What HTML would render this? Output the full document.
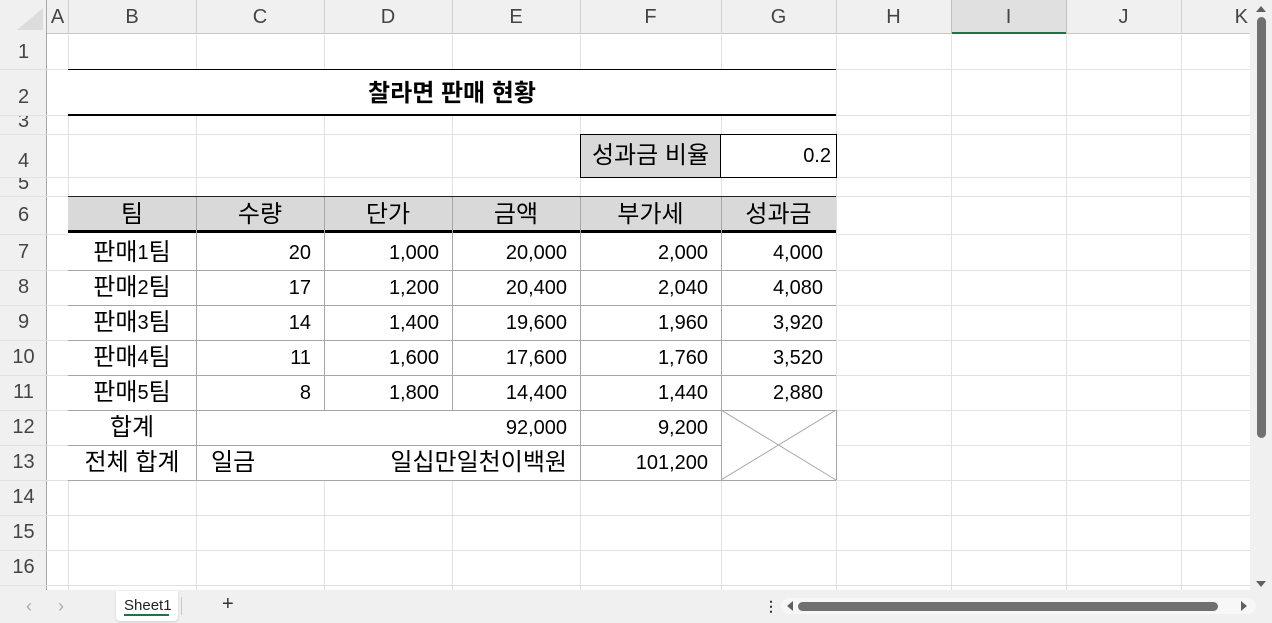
<!DOCTYPE html>
<html><head><meta charset="utf-8"><style>
*{margin:0;padding:0;box-sizing:border-box}
body{width:1272px;height:623px;overflow:hidden;background:#fff;position:relative;font-family:"Liberation Sans","Noto Sans CJK KR",sans-serif;color:#000}
.a{position:absolute}
.v{position:absolute;width:1px;background:#e1e1e1}
.h{position:absolute;height:1px;background:#e1e1e1}
.t{position:absolute;font-size:20px;line-height:20px;display:flex;align-items:center;white-space:nowrap}
.k{font-size:24px;line-height:20px}
.r{justify-content:flex-end;padding-right:13px}
.c{justify-content:center}
.hd{position:absolute;font-size:20px;color:#444;display:flex;align-items:center;justify-content:center}
</style></head><body>
<div class="a" style="left:0;top:0;width:1250px;height:34px;background:#f0f0f0;border-bottom:1px solid #c8c8c8"></div>
<div class="a" style="left:0;top:0;width:47px;height:590px;background:#f0f0f0;border-right:1px solid #a8a8a8"></div>
<div class="a" style="left:17px;top:8px;width:0;height:0;border-left:26px solid transparent;border-bottom:22px solid #dcdcdc"></div>
<div class="a" style="left:951px;top:0;width:115px;height:34px;background:#e0e0e0;border-bottom:2px solid #217346"></div>
<div class="v" style="left:68px;top:0;height:34px;background:#d0d0d0"></div>
<div class="v" style="left:196px;top:0;height:34px;background:#d0d0d0"></div>
<div class="v" style="left:324px;top:0;height:34px;background:#d0d0d0"></div>
<div class="v" style="left:452px;top:0;height:34px;background:#d0d0d0"></div>
<div class="v" style="left:580px;top:0;height:34px;background:#d0d0d0"></div>
<div class="v" style="left:721px;top:0;height:34px;background:#d0d0d0"></div>
<div class="v" style="left:836px;top:0;height:34px;background:#d0d0d0"></div>
<div class="v" style="left:951px;top:0;height:34px;background:#c0c0c0"></div>
<div class="v" style="left:1066px;top:0;height:34px;background:#c0c0c0"></div>
<div class="v" style="left:1181px;top:0;height:34px;background:#d0d0d0"></div>
<div class="hd" style="left:47px;top:0;width:21px;height:34px">A</div>
<div class="hd" style="left:68px;top:0;width:128px;height:34px">B</div>
<div class="hd" style="left:196px;top:0;width:128px;height:34px">C</div>
<div class="hd" style="left:324px;top:0;width:128px;height:34px">D</div>
<div class="hd" style="left:452px;top:0;width:128px;height:34px">E</div>
<div class="hd" style="left:580px;top:0;width:141px;height:34px">F</div>
<div class="hd" style="left:721px;top:0;width:115px;height:34px">G</div>
<div class="hd" style="left:836px;top:0;width:115px;height:34px">H</div>
<div class="hd" style="left:951px;top:0;width:115px;height:34px">I</div>
<div class="hd" style="left:1066px;top:0;width:115px;height:34px">J</div>
<div class="hd" style="left:1150px;top:0;width:98px;height:34px;justify-content:flex-end">K</div>
<div class="v" style="left:68px;top:35px;height:555px"></div>
<div class="v" style="left:196px;top:35px;height:555px"></div>
<div class="v" style="left:324px;top:35px;height:555px"></div>
<div class="v" style="left:452px;top:35px;height:555px"></div>
<div class="v" style="left:580px;top:35px;height:555px"></div>
<div class="v" style="left:721px;top:35px;height:555px"></div>
<div class="v" style="left:836px;top:35px;height:555px"></div>
<div class="v" style="left:951px;top:35px;height:555px"></div>
<div class="v" style="left:1066px;top:35px;height:555px"></div>
<div class="v" style="left:1181px;top:35px;height:555px"></div>
<div class="v" style="left:1250px;top:35px;height:555px"></div>
<div class="h" style="left:0;top:69px;width:1250px"></div>
<div class="h" style="left:0;top:115px;width:1250px"></div>
<div class="h" style="left:0;top:134px;width:1250px"></div>
<div class="h" style="left:0;top:177px;width:1250px"></div>
<div class="h" style="left:0;top:196px;width:1250px"></div>
<div class="h" style="left:0;top:234px;width:1250px"></div>
<div class="h" style="left:0;top:270px;width:1250px"></div>
<div class="h" style="left:0;top:305px;width:1250px"></div>
<div class="h" style="left:0;top:340px;width:1250px"></div>
<div class="h" style="left:0;top:375px;width:1250px"></div>
<div class="h" style="left:0;top:410px;width:1250px"></div>
<div class="h" style="left:0;top:445px;width:1250px"></div>
<div class="h" style="left:0;top:480px;width:1250px"></div>
<div class="h" style="left:0;top:515px;width:1250px"></div>
<div class="h" style="left:0;top:550px;width:1250px"></div>
<div class="h" style="left:0;top:585px;width:1250px"></div>
<div class="hd" style="left:0;top:35px;width:47px;height:34px">1</div>
<div class="hd" style="left:0;top:80px;width:47px;height:35px">2</div>
<div class="a" style="left:0;top:116px;width:47px;height:18px;overflow:hidden"><div class="hd" style="left:0;top:-5px;width:47px;height:20px">3</div></div>
<div class="hd" style="left:0;top:145px;width:47px;height:32px">4</div>
<div class="a" style="left:0;top:178px;width:47px;height:18px;overflow:hidden"><div class="hd" style="left:0;top:-5px;width:47px;height:20px">5</div></div>
<div class="hd" style="left:0;top:196px;width:47px;height:38px">6</div>
<div class="hd" style="left:0;top:234px;width:47px;height:36px">7</div>
<div class="hd" style="left:0;top:270px;width:47px;height:35px">8</div>
<div class="hd" style="left:0;top:305px;width:47px;height:35px">9</div>
<div class="hd" style="left:0;top:340px;width:47px;height:35px">10</div>
<div class="hd" style="left:0;top:375px;width:47px;height:35px">11</div>
<div class="hd" style="left:0;top:410px;width:47px;height:35px">12</div>
<div class="hd" style="left:0;top:445px;width:47px;height:35px">13</div>
<div class="hd" style="left:0;top:480px;width:47px;height:35px">14</div>
<div class="hd" style="left:0;top:515px;width:47px;height:35px">15</div>
<div class="hd" style="left:0;top:550px;width:47px;height:35px">16</div>
<div class="a" style="left:68px;top:69px;width:768px;height:47px;background:#fff;border-top:1px solid #000;border-bottom:2px solid #000"></div>
<div class="t c" style="left:68px;top:72px;width:768px;height:44px;font-weight:bold;font-size:24px">찰라면 판매 현황</div>
<div class="a" style="left:580px;top:134px;width:257px;height:44px;border:1px solid #000;background:#fff"></div>
<div class="a" style="left:581px;top:135px;width:140px;height:42px;background:#d9d9d9;border-right:1px solid #000"></div>
<div class="t c k" style="left:580px;top:135px;width:141px;height:42px">성과금 비율</div>
<div class="t r" style="left:721px;top:135px;width:115px;height:42px;padding-right:5px">0.2</div>
<div class="a" style="left:68px;top:196px;width:768px;height:284px;background:#fff;border-top:1px solid #222"></div>
<div class="a" style="left:68px;top:197px;width:768px;height:36px;background:#d9d9d9;border-bottom:3px solid #000"></div>
<div class="a" style="left:196px;top:197px;width:1px;height:213px;background:#a6a6a6"></div>
<div class="a" style="left:324px;top:197px;width:1px;height:213px;background:#a6a6a6"></div>
<div class="a" style="left:452px;top:197px;width:1px;height:213px;background:#a6a6a6"></div>
<div class="a" style="left:196px;top:410px;width:1px;height:70px;background:#a6a6a6"></div>
<div class="a" style="left:580px;top:197px;width:1px;height:283px;background:#a6a6a6"></div>
<div class="a" style="left:721px;top:197px;width:1px;height:283px;background:#a6a6a6"></div>
<div class="a" style="left:68px;top:270px;width:768px;height:1px;background:#a6a6a6"></div>
<div class="a" style="left:68px;top:305px;width:768px;height:1px;background:#a6a6a6"></div>
<div class="a" style="left:68px;top:340px;width:768px;height:1px;background:#a6a6a6"></div>
<div class="a" style="left:68px;top:375px;width:768px;height:1px;background:#a6a6a6"></div>
<div class="a" style="left:68px;top:410px;width:768px;height:1px;background:#a6a6a6"></div>
<div class="a" style="left:68px;top:445px;width:653px;height:1px;background:#a6a6a6"></div>
<div class="a" style="left:68px;top:480px;width:768px;height:1px;background:#a6a6a6"></div>
<div class="a" style="left:836px;top:410px;width:1px;height:70px;background:#a6a6a6"></div>
<svg class="a" style="left:721px;top:410px" width="116" height="71"><line x1="0" y1="0" x2="115" y2="70" stroke="#a6a6a6"/><line x1="115" y1="0" x2="0" y2="70" stroke="#a6a6a6"/></svg>
<div class="t c k" style="left:68px;top:197px;width:128px;height:36px">팀</div>
<div class="t c k" style="left:196px;top:197px;width:128px;height:36px">수량</div>
<div class="t c k" style="left:324px;top:197px;width:128px;height:36px">단가</div>
<div class="t c k" style="left:452px;top:197px;width:128px;height:36px">금액</div>
<div class="t c k" style="left:580px;top:197px;width:141px;height:36px">부가세</div>
<div class="t c k" style="left:721px;top:197px;width:115px;height:36px">성과금</div>

<div class="t c" style="left:68px;top:235px;width:128px;height:35px"><span class="k">판매 </span>1<span class="k">팀</span></div>
<div class="t r" style="left:196px;top:235px;width:128px;height:35px">20</div>
<div class="t r" style="left:324px;top:235px;width:128px;height:35px">1,000</div>
<div class="t r" style="left:452px;top:235px;width:128px;height:35px">20,000</div>
<div class="t r" style="left:580px;top:235px;width:141px;height:35px">2,000</div>
<div class="t r" style="left:721px;top:235px;width:115px;height:35px">4,000</div>

<div class="t c" style="left:68px;top:271px;width:128px;height:34px"><span class="k">판매 </span>2<span class="k">팀</span></div>
<div class="t r" style="left:196px;top:271px;width:128px;height:34px">17</div>
<div class="t r" style="left:324px;top:271px;width:128px;height:34px">1,200</div>
<div class="t r" style="left:452px;top:271px;width:128px;height:34px">20,400</div>
<div class="t r" style="left:580px;top:271px;width:141px;height:34px">2,040</div>
<div class="t r" style="left:721px;top:271px;width:115px;height:34px">4,080</div>

<div class="t c" style="left:68px;top:306px;width:128px;height:34px"><span class="k">판매 </span>3<span class="k">팀</span></div>
<div class="t r" style="left:196px;top:306px;width:128px;height:34px">14</div>
<div class="t r" style="left:324px;top:306px;width:128px;height:34px">1,400</div>
<div class="t r" style="left:452px;top:306px;width:128px;height:34px">19,600</div>
<div class="t r" style="left:580px;top:306px;width:141px;height:34px">1,960</div>
<div class="t r" style="left:721px;top:306px;width:115px;height:34px">3,920</div>

<div class="t c" style="left:68px;top:341px;width:128px;height:34px"><span class="k">판매 </span>4<span class="k">팀</span></div>
<div class="t r" style="left:196px;top:341px;width:128px;height:34px">11</div>
<div class="t r" style="left:324px;top:341px;width:128px;height:34px">1,600</div>
<div class="t r" style="left:452px;top:341px;width:128px;height:34px">17,600</div>
<div class="t r" style="left:580px;top:341px;width:141px;height:34px">1,760</div>
<div class="t r" style="left:721px;top:341px;width:115px;height:34px">3,520</div>

<div class="t c" style="left:68px;top:376px;width:128px;height:34px"><span class="k">판매 </span>5<span class="k">팀</span></div>
<div class="t r" style="left:196px;top:376px;width:128px;height:34px">8</div>
<div class="t r" style="left:324px;top:376px;width:128px;height:34px">1,800</div>
<div class="t r" style="left:452px;top:376px;width:128px;height:34px">14,400</div>
<div class="t r" style="left:580px;top:376px;width:141px;height:34px">1,440</div>
<div class="t r" style="left:721px;top:376px;width:115px;height:34px">2,880</div>

<div class="t c k" style="left:68px;top:411px;width:128px;height:34px">합계</div>
<div class="t r" style="left:196px;top:411px;width:384px;height:34px">92,000</div>
<div class="t r" style="left:580px;top:411px;width:141px;height:34px">9,200</div>

<div class="t c k" style="left:68px;top:446px;width:128px;height:34px">전체 합계</div>
<div class="t k" style="left:211px;top:446px;width:100px;height:34px">일금</div>
<div class="t r k" style="left:196px;top:446px;width:384px;height:34px">일십만일천이백원</div>
<div class="t r" style="left:580px;top:446px;width:141px;height:34px">101,200</div>

<div class="a" style="left:1250px;top:0;width:22px;height:590px;background:#f0f0f0"></div>
<div class="a" style="left:1256px;top:6px;width:0;height:0;border-left:5px solid transparent;border-right:5px solid transparent;border-bottom:6px solid #606060"></div>
<div class="a" style="left:1257px;top:17px;width:9px;height:421px;background:#707070;border-radius:5px"></div>
<div class="a" style="left:1256px;top:581px;width:0;height:0;border-left:5px solid transparent;border-right:5px solid transparent;border-top:6px solid #606060"></div>
<div class="a" style="left:0;top:590px;width:1272px;height:33px;background:#f0f0f0"></div>
<div class="a" style="left:26px;top:596px;font-size:18px;color:#aaa">&lsaquo;</div>
<div class="a" style="left:58px;top:596px;font-size:18px;color:#aaa">&rsaquo;</div>
<div class="a" style="left:116px;top:591px;width:62px;height:30px;background:#fff;border-radius:0 0 4px 4px;box-shadow:0 1px 2px #ccc"></div>
<div class="a" style="left:124px;top:597px;font-size:15px;color:#222">Sheet1</div>
<div class="a" style="left:124px;top:614px;width:45px;height:2px;background:#217346"></div>
<div class="a" style="left:181px;top:597px;width:1px;height:18px;background:#c8c8c8"></div>
<div class="a" style="left:222px;top:593px;font-size:20px;color:#333">+</div>
<div class="a" style="left:764px;top:598px;font-size:14px;color:#333;font-weight:bold">&#8942;</div>
<div class="a" style="left:781px;top:598px;width:475px;height:16px;background:#f7f7f7;border-radius:8px"></div>
<div class="a" style="left:787px;top:601px;width:0;height:0;border-top:5px solid transparent;border-bottom:5px solid transparent;border-right:6px solid #606060"></div>
<div class="a" style="left:798px;top:602px;width:420px;height:9px;background:#707070;border-radius:5px"></div>
<div class="a" style="left:1241px;top:601px;width:0;height:0;border-top:5px solid transparent;border-bottom:5px solid transparent;border-left:6px solid #606060"></div>
</body></html>
